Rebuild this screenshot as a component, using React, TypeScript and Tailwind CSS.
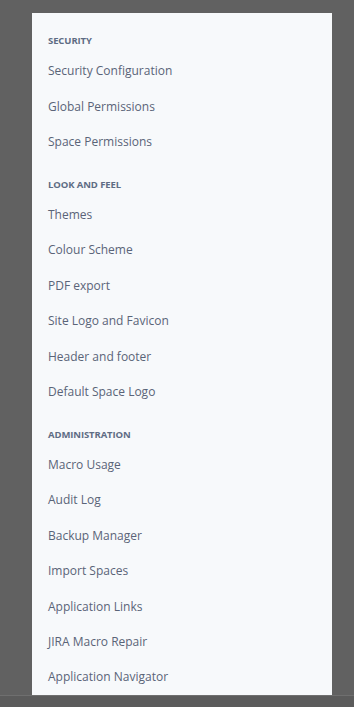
const sections = [
  {
    title: 'Security',
    items: ['Security Configuration', 'Global Permissions', 'Space Permissions'],
  },
  {
    title: 'Look and Feel',
    items: ['Themes', 'Colour Scheme', 'PDF export', 'Site Logo and Favicon', 'Header and footer', 'Default Space Logo'],
  },
  {
    title: 'Administration',
    items: [
      'Macro Usage',
      'Audit Log',
      'Backup Manager',
      'Import Spaces',
      'Application Links',
      'JIRA Macro Repair',
      'Application Navigator',
    ],
  },
]

export default function App() {
  return (
    <div className="h-[707px] w-[354px] overflow-hidden bg-[#616161] flex flex-col font-['Open_Sans',sans-serif]">
      <div className="h-[13px] shrink-0" />
      <div className="flex-1 min-h-0 px-[32px] overflow-hidden">
        {/* Sidebar nav */}
        <nav className="h-full w-[300px] bg-[#f7f9fb] pt-[3px] px-[16px] overflow-hidden">
          {sections.map((section) => (
            <div key={section.title}>
              <div className="h-[37.6px] pt-[20px] text-[9.5px] leading-[10px] font-bold uppercase text-[#5e6c84] tracking-[-0.1px]">
                {section.title}
              </div>
              {section.items.map((item) => (
                <div key={item} className="h-[35.4px] flex items-center text-[12px] text-[#5a6478]">
                  {item}
                </div>
              ))}
            </div>
          ))}
        </nav>
      </div>
      <div className="h-[12px] shrink-0 border-t border-[#6f6f6f] bg-[#5b5b5b]" />
    </div>
  )
}
